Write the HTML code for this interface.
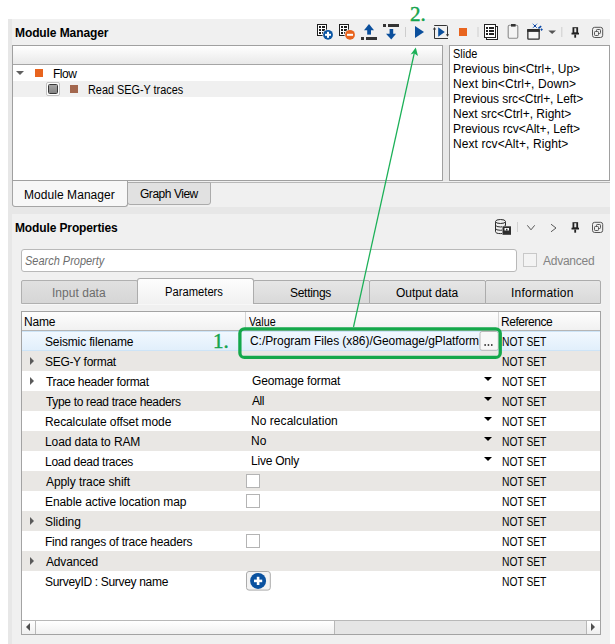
<!DOCTYPE html>
<html><head><meta charset="utf-8">
<style>
*{box-sizing:border-box;margin:0;padding:0}
html,body{width:615px;height:644px;overflow:hidden;background:#fff;font-family:"Liberation Sans",sans-serif;font-size:12px;color:#000}
.a{position:absolute}
.t{position:absolute;white-space:nowrap;line-height:14px}
svg{position:absolute;left:0;top:0;overflow:visible}

</style></head><body>
<div class="a" style="left:8px;top:19px;width:602px;height:625px;background:#e7e7e7"></div>
<div class="a" style="left:12px;top:19px;width:598px;height:188px;background:#f0f0f0"></div>
<div class="a" style="left:12px;top:214px;width:598px;height:430px;background:#f0f0f0"></div>

<!-- tree -->
<div class="a" style="left:12px;top:45px;width:431px;height:136px;background:#fff;border:1px solid #a0a0a0"></div>
<div class="a" style="left:13px;top:46px;width:429px;height:19px;background:linear-gradient(#fff,#e9e9e9);border-bottom:1px solid #a5a5a5"></div>
<div class="a" style="left:16px;top:71px;width:0;height:0;border-left:4px solid transparent;border-right:4px solid transparent;border-top:4px solid #606060"></div>
<div class="a" style="left:35px;top:69px;width:8px;height:8px;background:#e8641e"></div>
<div class="a" style="left:13px;top:81px;width:429px;height:16px;background:#f0f0f0"></div>
<div class="a" style="left:46px;top:82px;width:14px;height:14px;background:#fff;border:1px solid #c2c2c2;border-radius:2px"></div>
<div class="a" style="left:48px;top:84px;width:10px;height:10px;border:1px solid #383838;border-radius:1.5px;background:linear-gradient(#a4a4a4,#858585)"></div>
<div class="a" style="left:70px;top:85px;width:8px;height:8px;background:#a3674e"></div>

<!-- slide list -->
<div class="a" style="left:449px;top:45px;width:161px;height:136px;background:#fff;border:1px solid #a0a0a0"></div>

<!-- mm tabs -->
<div class="a" style="left:443px;top:45px;width:6px;height:136px;background:#e8e8e8"></div>
<div class="a" style="left:12px;top:182px;width:598px;height:1px;background:#b9b9b9"></div>
<div class="a" style="left:127px;top:182px;width:84px;height:23px;background:#e1e1e1;border:1px solid #ababab;border-radius:0 0 3px 3px"></div>
<div class="a" style="left:12px;top:181px;width:116px;height:26px;background:#f7f7f7;border:1px solid #a5a5a5;border-top:none;border-radius:0 0 3px 3px"></div>

<!-- search -->
<div class="a" style="left:21px;top:249px;width:496px;height:23px;background:#fff;border:1px solid #b9b9b9;border-radius:3px"></div>
<div class="a" style="left:523px;top:253px;width:14px;height:14px;border:1px solid #c8c8c8;background:#f3f3f3"></div>

<!-- prop tabs -->
<div class="a" style="left:21px;top:280px;width:117px;height:24px;background:linear-gradient(#e0e0e0,#d6d6d6);border:1px solid #b0b0b0;border-radius:2px 2px 0 0"></div>
<div class="a" style="left:253px;top:280px;width:117px;height:24px;background:linear-gradient(#e6e6e6,#d9d9d9);border:1px solid #acacac;border-radius:2px 2px 0 0"></div>
<div class="a" style="left:369px;top:280px;width:117px;height:24px;background:linear-gradient(#e6e6e6,#d9d9d9);border:1px solid #acacac;border-radius:2px 2px 0 0"></div>
<div class="a" style="left:485px;top:280px;width:116px;height:24px;background:linear-gradient(#e6e6e6,#d9d9d9);border:1px solid #acacac;border-radius:2px 2px 0 0"></div>
<div class="a" style="left:137px;top:278px;width:117px;height:26px;background:linear-gradient(#fdfdfd,#f1f1f1);border:1px solid #acacac;border-bottom:none;border-radius:3px 3px 0 0"></div>
<div class="a" style="left:21px;top:304px;width:580px;height:1px;background:#f7f7f7"></div>
<!-- table -->
<div class="a" style="left:21px;top:311px;width:580px;height:324px;background:#fff;border:1px solid #a3a3a3"></div>
<div class="a" style="left:22px;top:312px;width:578px;height:19px;background:linear-gradient(#fdfdfd,#f1f1f1);border-bottom:1px solid #b5b5b5"></div>
<div class="a" style="left:245px;top:312px;width:1px;height:18px;background:#d5d5d5"></div>
<div class="a" style="left:498px;top:312px;width:1px;height:18px;background:#d5d5d5"></div>
<div class="a" style="left:22px;top:331px;width:578px;height:20px;background:linear-gradient(#f1f8fe,#e1effb);border-top:1px solid #cde4f7;border-bottom:1px solid #cde4f7"></div>
<div class="a" style="left:22px;top:351px;width:578px;height:20px;background:#e9e7e4"></div>
<div class="a" style="left:22px;top:391px;width:578px;height:20px;background:#e9e7e4"></div>
<div class="a" style="left:22px;top:431px;width:578px;height:20px;background:#e9e7e4"></div>
<div class="a" style="left:22px;top:471px;width:578px;height:20px;background:#e9e7e4"></div>
<div class="a" style="left:22px;top:511px;width:578px;height:20px;background:#e9e7e4"></div>
<div class="a" style="left:22px;top:551px;width:578px;height:20px;background:#e9e7e4"></div>
<div class="a" style="left:30px;top:357px;width:0;height:0;border-top:4px solid transparent;border-bottom:4px solid transparent;border-left:4px solid #5a5a5a"></div>
<div class="a" style="left:30px;top:377px;width:0;height:0;border-top:4px solid transparent;border-bottom:4px solid transparent;border-left:4px solid #5a5a5a"></div>
<div class="a" style="left:30px;top:517px;width:0;height:0;border-top:4px solid transparent;border-bottom:4px solid transparent;border-left:4px solid #5a5a5a"></div>
<div class="a" style="left:30px;top:557px;width:0;height:0;border-top:4px solid transparent;border-bottom:4px solid transparent;border-left:4px solid #5a5a5a"></div>
<div class="a" style="left:484px;top:377px;width:0;height:0;border-left:4px solid transparent;border-right:4px solid transparent;border-top:4px solid #000"></div>
<div class="a" style="left:484px;top:397px;width:0;height:0;border-left:4px solid transparent;border-right:4px solid transparent;border-top:4px solid #000"></div>
<div class="a" style="left:484px;top:417px;width:0;height:0;border-left:4px solid transparent;border-right:4px solid transparent;border-top:4px solid #000"></div>
<div class="a" style="left:484px;top:437px;width:0;height:0;border-left:4px solid transparent;border-right:4px solid transparent;border-top:4px solid #000"></div>
<div class="a" style="left:484px;top:457px;width:0;height:0;border-left:4px solid transparent;border-right:4px solid transparent;border-top:4px solid #000"></div>
<div class="a" style="left:246px;top:474px;width:14px;height:14px;border:1px solid #b4b4b4;background:#fff"></div>
<div class="a" style="left:246px;top:494px;width:14px;height:14px;border:1px solid #b4b4b4;background:#fff"></div>
<div class="a" style="left:246px;top:534px;width:14px;height:14px;border:1px solid #b4b4b4;background:#fff"></div>
<!-- scrollbar -->
<div class="a" style="left:22px;top:620px;width:578px;height:14px;background:#e5e5e5;border-top:1px solid #b8b8b8"></div>
<div class="a" style="left:22px;top:621px;width:14px;height:13px;background:linear-gradient(#fff,#efefef);border-right:1px solid #b8b8b8"></div>
<div class="a" style="left:36px;top:621px;width:299px;height:13px;background:linear-gradient(#fff,#f0f0f0);border-right:1px solid #b8b8b8"></div>
<div class="a" style="left:586px;top:621px;width:14px;height:13px;background:linear-gradient(#fff,#efefef);border-left:1px solid #b8b8b8"></div>
<div class="a" style="left:26px;top:623px;width:0;height:0;border-top:4px solid transparent;border-bottom:4px solid transparent;border-right:4px solid #505050"></div>
<div class="a" style="left:591px;top:623px;width:0;height:0;border-top:4px solid transparent;border-bottom:4px solid transparent;border-left:4px solid #505050"></div>
<div class="t" id="t_mm" style="left:15px;top:26px;letter-spacing:-0.095px;font-weight:bold;">Module Manager</div>
<div class="t" id="t_flow" style="left:53px;top:67px;letter-spacing:-0.466px;">Flow</div>
<div class="t" id="t_read" style="left:88px;top:83px;letter-spacing:0.000px;transform:scaleX(0.9048);transform-origin:0 0;">Read SEG-Y traces</div>
<div class="t" id="t_sl0" style="left:453px;top:47px;letter-spacing:0.000px;transform:scaleX(0.9094);transform-origin:0 0;">Slide</div>
<div class="t" id="t_sl1" style="left:453px;top:62px;letter-spacing:-0.030px;">Previous bin&lt;Ctrl+, Up&gt;</div>
<div class="t" id="t_sl2" style="left:453px;top:77px;letter-spacing:0.100px;">Next bin&lt;Ctrl+, Down&gt;</div>
<div class="t" id="t_sl3" style="left:453px;top:92px;letter-spacing:-0.089px;">Previous src&lt;Ctrl+, Left&gt;</div>
<div class="t" id="t_sl4" style="left:453px;top:107px;letter-spacing:-0.000px;">Next src&lt;Ctrl+, Right&gt;</div>
<div class="t" id="t_sl5" style="left:453px;top:122px;letter-spacing:-0.027px;">Previous rcv&lt;Alt+, Left&gt;</div>
<div class="t" id="t_sl6" style="left:453px;top:137px;letter-spacing:0.080px;">Next rcv&lt;Alt+, Right&gt;</div>
<div class="t" id="t_tabmm" style="left:24px;top:188px;letter-spacing:0.058px;">Module Manager</div>
<div class="t" id="t_tabgv" style="left:140px;top:187px;letter-spacing:-0.466px;">Graph View</div>
<div class="t" id="t_mp" style="left:15px;top:221px;letter-spacing:-0.125px;font-weight:bold;">Module Properties</div>
<div class="t" id="t_search" style="left:25px;top:254px;letter-spacing:0.000px;font-style:italic;color:#6d6d6d;transform:scaleX(0.9145);transform-origin:0 0;">Search Property</div>
<div class="t" id="t_adv" style="left:543px;top:254px;letter-spacing:-0.260px;color:#838383;">Advanced</div>
<div class="t" id="t_in" style="left:52px;top:286px;letter-spacing:0.027px;color:#6d6d6d;">Input data</div>
<div class="t" id="t_par" style="left:165px;top:285px;letter-spacing:0.000px;transform:scaleX(0.9345);transform-origin:0 0;">Parameters</div>
<div class="t" id="t_set" style="left:290px;top:286px;letter-spacing:-0.285px;">Settings</div>
<div class="t" id="t_out" style="left:396px;top:286px;letter-spacing:-0.060px;">Output data</div>
<div class="t" id="t_inf" style="left:511px;top:286px;letter-spacing:0.240px;">Information</div>
<div class="t" id="t_name" style="left:24px;top:315px;letter-spacing:-0.198px;">Name</div>
<div class="t" id="t_value" style="left:249px;top:315px;letter-spacing:0.000px;transform:scaleX(0.8941);transform-origin:0 0;">Value</div>
<div class="t" id="t_ref" style="left:501px;top:315px;letter-spacing:-0.450px;">Reference</div>
<div class="t" id="n0" style="left:45px;top:335px;letter-spacing:-0.145px;">Seismic filename</div>
<div class="t" id="r0" style="left:502px;top:335px;letter-spacing:0.000px;transform:scaleX(0.8571);transform-origin:0 0;">NOT SET</div>
<div class="t" id="n1" style="left:45px;top:355px;letter-spacing:-0.307px;">SEG-Y format</div>
<div class="t" id="r1" style="left:502px;top:355px;letter-spacing:0.000px;transform:scaleX(0.8571);transform-origin:0 0;">NOT SET</div>
<div class="t" id="n2" style="left:46px;top:375px;letter-spacing:-0.289px;">Trace header format</div>
<div class="t" id="r2" style="left:502px;top:375px;letter-spacing:0.000px;transform:scaleX(0.8571);transform-origin:0 0;">NOT SET</div>
<div class="t" id="n3" style="left:46px;top:395px;letter-spacing:-0.336px;">Type to read trace headers</div>
<div class="t" id="r3" style="left:502px;top:395px;letter-spacing:0.000px;transform:scaleX(0.8571);transform-origin:0 0;">NOT SET</div>
<div class="t" id="n4" style="left:45px;top:415px;letter-spacing:-0.100px;">Recalculate offset mode</div>
<div class="t" id="r4" style="left:502px;top:415px;letter-spacing:0.000px;transform:scaleX(0.8571);transform-origin:0 0;">NOT SET</div>
<div class="t" id="n5" style="left:45px;top:435px;letter-spacing:-0.091px;">Load data to RAM</div>
<div class="t" id="r5" style="left:502px;top:435px;letter-spacing:0.000px;transform:scaleX(0.8571);transform-origin:0 0;">NOT SET</div>
<div class="t" id="n6" style="left:45px;top:455px;letter-spacing:-0.294px;">Load dead traces</div>
<div class="t" id="r6" style="left:502px;top:455px;letter-spacing:0.000px;transform:scaleX(0.8571);transform-origin:0 0;">NOT SET</div>
<div class="t" id="n7" style="left:46px;top:475px;letter-spacing:-0.078px;">Apply trace shift</div>
<div class="t" id="r7" style="left:502px;top:475px;letter-spacing:0.000px;transform:scaleX(0.8571);transform-origin:0 0;">NOT SET</div>
<div class="t" id="n8" style="left:45px;top:495px;letter-spacing:-0.080px;">Enable active location map</div>
<div class="t" id="r8" style="left:502px;top:495px;letter-spacing:0.000px;transform:scaleX(0.8571);transform-origin:0 0;">NOT SET</div>
<div class="t" id="n9" style="left:45px;top:515px;letter-spacing:-0.031px;">Sliding</div>
<div class="t" id="r9" style="left:502px;top:515px;letter-spacing:0.000px;transform:scaleX(0.8571);transform-origin:0 0;">NOT SET</div>
<div class="t" id="n10" style="left:45px;top:535px;letter-spacing:-0.223px;">Find ranges of trace headers</div>
<div class="t" id="r10" style="left:502px;top:535px;letter-spacing:0.000px;transform:scaleX(0.8571);transform-origin:0 0;">NOT SET</div>
<div class="t" id="n11" style="left:46px;top:555px;letter-spacing:-0.174px;">Advanced</div>
<div class="t" id="r11" style="left:502px;top:555px;letter-spacing:0.000px;transform:scaleX(0.8571);transform-origin:0 0;">NOT SET</div>
<div class="t" id="n12" style="left:45px;top:575px;letter-spacing:-0.321px;">SurveyID : Survey name</div>
<div class="t" id="r12" style="left:502px;top:575px;letter-spacing:0.000px;transform:scaleX(0.8571);transform-origin:0 0;">NOT SET</div>
<div class="t" id="v0" style="left:250px;top:334px;letter-spacing:-0.059px;">C:/Program Files (x86)/Geomage/gPlatform</div>
<div class="t" id="v2" style="left:252px;top:374px;letter-spacing:-0.127px;">Geomage format</div>
<div class="t" id="v3" style="left:252px;top:394px;letter-spacing:-0.400px;">All</div>
<div class="t" id="v4" style="left:251px;top:414px;letter-spacing:0.050px;">No recalculation</div>
<div class="t" id="v5" style="left:251px;top:434px;letter-spacing:0.200px;">No</div>
<div class="t" id="v6" style="left:251px;top:454px;letter-spacing:-0.225px;">Live Only</div><svg width="615" height="644" viewBox="0 0 615 644">
<!-- ===== panel 1 toolbar ===== -->
<g id="addmod">
  <rect x="317.5" y="24.5" width="9" height="11" fill="#fff" stroke="#1e1e1e" stroke-width="1"/>
  <g fill="#1e1e1e"><rect x="319" y="26" width="2" height="2"/><rect x="322" y="26" width="3" height="2"/><rect x="319" y="29" width="2" height="2"/><rect x="322" y="29" width="3" height="2"/><rect x="319" y="32" width="2" height="2"/><rect x="322" y="32" width="3" height="2"/></g>
  <circle cx="328" cy="34.8" r="5.6" fill="#f0f0f0"/>
  <circle cx="328" cy="34.8" r="4.9" fill="#0b56a3"/>
  <rect x="325" y="33.8" width="6" height="2" fill="#fff"/><rect x="327" y="31.8" width="2" height="6" fill="#fff"/>
</g>
<g id="delmod">
  <rect x="339.5" y="24.5" width="9" height="11" fill="#fff" stroke="#1e1e1e" stroke-width="1"/>
  <g fill="#1e1e1e"><rect x="341" y="26" width="2" height="2"/><rect x="344" y="26" width="3" height="2"/><rect x="341" y="29" width="2" height="2"/><rect x="344" y="29" width="3" height="2"/><rect x="341" y="32" width="2" height="2"/><rect x="344" y="32" width="3" height="2"/></g>
  <circle cx="350" cy="34.8" r="5.6" fill="#f0f0f0"/>
  <circle cx="350" cy="34.8" r="4.9" fill="#e8641e"/>
  <rect x="347" y="33.8" width="6" height="2" fill="#fff"/>
</g>
<g id="up">
  <polygon points="364,30.3 369,24 374,30.3" fill="#0b4f9c"/>
  <rect x="367.2" y="30" width="3.8" height="4.6" fill="#0b4f9c"/>
  <rect x="361" y="37" width="3" height="3" fill="#333"/><rect x="366" y="37" width="11" height="3" fill="#333"/>
</g>
<g id="down">
  <rect x="383" y="24" width="3" height="3" fill="#333"/><rect x="388" y="24" width="11" height="3" fill="#333"/>
  <rect x="389.6" y="29" width="3.6" height="5" fill="#0b4f9c"/>
  <polygon points="386,33.7 396,33.7 391.3,39.6" fill="#0b4f9c"/>
</g>
<rect x="405" y="27" width="1" height="10" fill="#cdcdcd"/>
<polygon points="415,26 424,32 415,38" fill="#0b4f9c"/>
<g id="loop" fill="none" stroke="#333" stroke-width="1">
  <path d="M434.2 25.5 H446.5 Q447.5 25.5 447.5 26.5 V35"/>
  <path d="M434.5 29 V38.5 H448"/>
</g>
<polygon points="432.9,29.5 436.1,29.5 434.5,27" fill="#333"/>
<polygon points="445.9,34.2 449.1,34.2 447.5,36.8" fill="#333"/>
<polygon points="438.2,27.2 444.8,32 438.2,36.8" fill="#0b4f9c"/>
<rect x="459" y="28" width="8" height="8" fill="#e8641e"/>
<rect x="477.5" y="27" width="1" height="10" fill="#cdcdcd"/>
<g id="doclist">
  <rect x="486.5" y="26.5" width="11" height="13" fill="#fff" stroke="#222" stroke-width="1"/>
  <rect x="484.5" y="24.5" width="11" height="13" fill="#fff" stroke="#222" stroke-width="1"/>
  <g fill="#222"><rect x="486" y="27" width="2" height="2"/><rect x="489" y="27" width="5" height="2"/><rect x="486" y="30" width="2" height="2"/><rect x="489" y="30" width="5" height="2"/><rect x="486" y="33" width="2" height="2"/><rect x="489" y="33" width="5" height="2"/></g>
</g>
<rect x="508.2" y="25.3" width="9.6" height="13" rx="1.2" fill="#f4f4f4" stroke="#8c8c8c" stroke-width="1.1"/>
<rect x="511" y="24" width="4.6" height="2.6" fill="#333"/>
<g id="win">
  <rect x="527.85" y="29.75" width="11.3" height="9.35" rx="0.6" fill="#f6f6f6" stroke="#2e2e2e" stroke-width="1.3"/>
  <rect x="527.2" y="29.1" width="12.6" height="2.8" fill="#2e2e2e"/>
  <path d="M532.7 23.7 L537.1 28.1 M537.1 23.7 L532.7 28.1" stroke="#2a6cc4" stroke-width="0.9"/>
  <rect x="534" y="25" width="1.9" height="1.9" fill="#0b3f9b"/>
  <path d="M538.4 28.3 L541.2 26.1" stroke="#0d4aa6" stroke-width="1.7"/>
  <polygon points="541.6,28.3 542.9,29.6 541.6,30.9 540.3,29.6" fill="#0d4aa6"/>
</g>
<polygon points="548.3,30.4 556,30.4 552.2,34" fill="#555"/>
<rect x="561.3" y="27" width="1" height="10" fill="#cdcdcd"/>
<g id="pin1" fill="#222">
  <rect x="572.5" y="27.2" width="5.6" height="6"/>
  <rect x="574.3" y="28.2" width="2" height="4.2" fill="#e8e8e8"/>
  <rect x="571.5" y="32.7" width="7.5" height="1.8"/>
  <rect x="574.3" y="34.5" width="1.8" height="3.2"/>
</g>
<g id="float1" fill="none" stroke="#555" stroke-width="1">
  <rect x="592.5" y="27.3" width="10.2" height="10.2" rx="2.2"/>
  <rect x="596.5" y="29.5" width="4" height="4" rx="0.8"/>
  <rect x="594.5" y="31.5" width="4" height="4" rx="0.8" fill="#f0f0f0"/>
</g>

<!-- ===== panel 2 toolbar ===== -->
<g id="db" fill="#f0f0f0" stroke="#2a2a2a" stroke-width="1">
  <path d="M495.5 221.8 V231.5 Q495.5 233.6 500.5 233.6 Q505.5 233.6 505.5 231.5 V221.8"/>
  <ellipse cx="500.5" cy="221.5" rx="5" ry="2"/>
  <path d="M495.5 225 Q495.5 227 500.5 227 Q505.5 227 505.5 225" fill="none"/>
  <path d="M495.5 228.3 Q495.5 230.3 500.5 230.3 Q505.5 230.3 505.5 228.3" fill="none"/>
</g>
<rect x="502" y="225.8" width="9.5" height="9" fill="#f0f0f0"/>
<rect x="502.5" y="226.3" width="8.5" height="8.5" fill="#2e2e2e"/>
<rect x="504.5" y="228" width="4.5" height="2.5" fill="#fff"/><rect x="506" y="228.8" width="1.5" height="1.7" fill="#2e2e2e"/>
<rect x="517" y="222" width="1" height="10" fill="#d2d2d2"/>
<polyline points="527.3,225.3 531,229.8 534.7,225.3" fill="none" stroke="#505050" stroke-width="0.95"/>
<polyline points="551,224.2 556,228 551,231.8" fill="none" stroke="#505050" stroke-width="0.95"/>
<g id="pin2" fill="#222">
  <rect x="572.5" y="222.2" width="5.6" height="6"/>
  <rect x="574.3" y="223.2" width="2" height="4.2" fill="#e8e8e8"/>
  <rect x="571.5" y="227.7" width="7.5" height="1.8"/>
  <rect x="574.3" y="229.5" width="1.8" height="3.2"/>
</g>
<g id="float2" fill="none" stroke="#555" stroke-width="1">
  <rect x="592.5" y="222.3" width="10.2" height="10.2" rx="2.2"/>
  <rect x="596.5" y="224.5" width="4" height="4" rx="0.8"/>
  <rect x="594.5" y="226.5" width="4" height="4" rx="0.8" fill="#f0f0f0"/>
</g>

<!-- ... button -->
<rect x="480" y="331.5" width="18.3" height="18.8" rx="2" fill="#f8f8f8" stroke="#b8b8b8" stroke-width="1"/>
<g fill="#222"><rect x="484.4" y="344.2" width="1.5" height="1.6"/><rect x="487.7" y="344.2" width="1.5" height="1.6"/><rect x="491" y="344.2" width="1.5" height="1.6"/></g>

<!-- survey button -->
<rect x="246.5" y="571.5" width="23.8" height="18.6" rx="2.5" fill="#f3f3f3" stroke="#ababab" stroke-width="1"/>
<circle cx="258.1" cy="580.9" r="8" fill="#0a52a0"/>
<rect x="254" y="579.6" width="8.2" height="2.6" fill="#fff"/><rect x="256.8" y="576.8" width="2.6" height="8.2" fill="#fff"/>

<!-- annotations -->
<rect x="239.9" y="328.8" width="260.35" height="28.6" rx="4.5" fill="none" stroke="#14a84b" stroke-width="3.3"/>
<line x1="353.5" y1="327" x2="414.3" y2="53" stroke="#1bb057" stroke-width="1.25"/>
<polygon points="415.8,47.5 410.6,54.5 414,53.3 418,55.9" fill="#1bb057"/>
</svg>
<div class="t" style="left:213px;top:329px;font-family:'Liberation Serif',serif;font-size:21px;line-height:24px;color:#13a44c;-webkit-text-stroke:0.45px #13a44c">1.</div>
<div class="t" style="left:410px;top:2px;font-family:'Liberation Serif',serif;font-size:21px;line-height:24px;color:#13a44c;-webkit-text-stroke:0.45px #13a44c">2.</div>

</body></html>
